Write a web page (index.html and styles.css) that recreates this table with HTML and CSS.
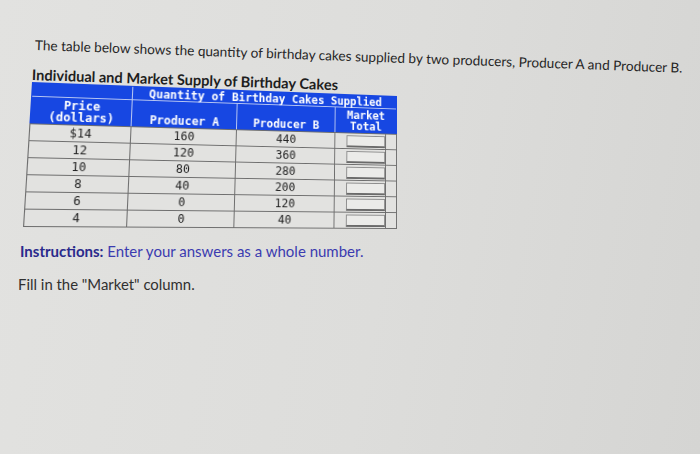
FILE: index.html
```html
<!DOCTYPE html>
<html lang="en">
<head>
<meta charset="utf-8">
<title>Individual and Market Supply of Birthday Cakes</title>
<link rel="stylesheet" href="styles.css">
</head>
<body>
<div class="page">
  <p class="lead">The table below shows the quantity of birthday cakes supplied by two producers, Producer A and Producer B.</p>
  <p class="caption">Individual and Market Supply of Birthday Cakes</p>
  <div class="supply" role="table" aria-label="Individual and Market Supply of Birthday Cakes">
    <div class="head">
      <div class="hcell blank"></div>
      <div class="hcell span4">Quantity of Birthday Cakes Supplied</div>
      <div class="hcell two">Price<br>(dollars)</div>
      <div class="hcell bottom">Producer A</div>
      <div class="hcell bottom">Producer B</div>
      <div class="hcell two span2">Market<br>Total</div>
    </div>
    <div class="body">
      <div class="cell">$14</div><div class="cell">160</div><div class="cell">440</div><div class="cell inp"><span class="box"></span></div><div class="cell"></div>
      <div class="cell">12</div><div class="cell">120</div><div class="cell">360</div><div class="cell inp"><span class="box"></span></div><div class="cell"></div>
      <div class="cell">10</div><div class="cell">80</div><div class="cell">280</div><div class="cell inp"><span class="box"></span></div><div class="cell"></div>
      <div class="cell">8</div><div class="cell">40</div><div class="cell">200</div><div class="cell inp"><span class="box"></span></div><div class="cell"></div>
      <div class="cell">6</div><div class="cell">0</div><div class="cell">120</div><div class="cell inp"><span class="box"></span></div><div class="cell"></div>
      <div class="cell">4</div><div class="cell">0</div><div class="cell">40</div><div class="cell inp"><span class="box"></span></div><div class="cell"></div>
    </div>
  </div>
  <p class="instr"><strong>Instructions:</strong> Enter your answers as a whole number.</p>
  <p class="fill">Fill in the "Market" column.</p>
</div>
</body>
</html>
```

FILE: styles.css
```css
html, body {
  margin: 0;
  padding: 0;
  width: 700px;
  height: 454px;
  overflow: hidden;
}
body {
  background: linear-gradient(100deg, #e2e2e0 0%, #dddddb 55%, #d5d5d3 100%);
  font-family: "Lato", "Open Sans", sans-serif;
  color: #262626;
}
.page {
  padding-top: 37px;
}
.lead {
  margin: 0 0 0 35px;
  font-size: 13.6px;
  line-height: 16px;
  height: 16px;
  white-space: nowrap;
  transform-origin: 0 50%;
  transform: rotate(2deg);
}
.caption {
  margin: 14px 0 0 32px;
  font-size: 14.6px;
  font-weight: 700;
  line-height: 15px;
  height: 15px;
  white-space: nowrap;
  color: #1e1e1e;
  transform-origin: 0 50%;
  transform: rotate(1.9deg);
}
.supply {
  margin-left: 32px;
  width: 372px;
  height: 145px;
  transform-origin: 0 0;
  transform: matrix3d(1.07007, 0.041046, 0, 0.00024352, -0.060576, 0.975936, 0, -0.00016596, 0, 0, 1, 0, 0, 0, 0, 1);
  font-family: "DejaVu Sans Mono", "Liberation Mono", monospace;
  font-size: 11.5px;
}
.head {
  display: grid;
  grid-template-columns: 95px 104px 102px 54px 11px;
  grid-template-rows: 13px 27px;
  gap: 1px;
  background: #b7c6f2;
  border: 1px solid #1747e2;
  border-bottom: 0;
}
.hcell {
  background: #1747e2;
  color: #ffffff;
  font-weight: 700;
  display: flex;
  align-items: center;
  justify-content: center;
  text-align: center;
  line-height: 12px;
  white-space: nowrap;
}
.span4 { grid-column: span 4; }
.span2 { grid-column: span 2; }
.hcell.two { line-height: 12px; padding-top: 1px; }
.hcell.bottom { align-items: flex-end; padding-bottom: 1px; }
.body {
  display: grid;
  grid-template-columns: 95px 104px 102px 54px 11px;
  grid-auto-rows: 16px;
  gap: 1px;
  background: #6e6e6e;
  border: 1px solid #6e6e6e;
}
.cell {
  background: #e2e2e0;
  color: #222222;
  display: flex;
  align-items: center;
  justify-content: center;
  line-height: 16px;
}
.cell.inp {
  justify-content: flex-start;
  padding-left: 12px;
}
.box {
  display: block;
  width: 42px;
  height: 13px;
  box-sizing: border-box;
  background: #ebebe9;
  border: 1px solid #8c8c8c;
  border-bottom: 2px solid #6a6a6a;
}
.instr {
  margin: 16px 0 0 20px;
  font-size: 15px;
  line-height: 16px;
  color: #3b3bb0;
  white-space: nowrap;
}
.instr strong {
  color: #2a2a8c;
  font-weight: 700;
}
.fill {
  margin: 17px 0 0 18px;
  font-size: 14.9px;
  line-height: 16px;
  color: #303030;
  white-space: nowrap;
}
```
